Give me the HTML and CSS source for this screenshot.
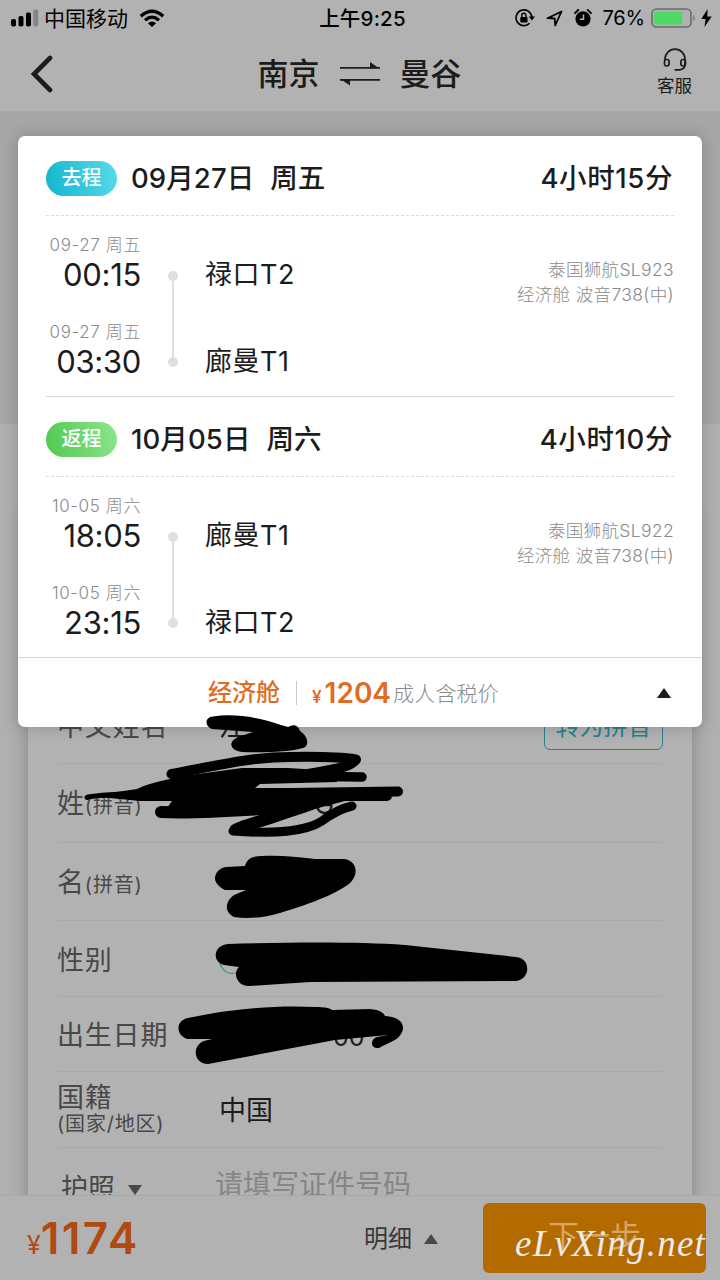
FILE: index.html
```html
<!DOCTYPE html>
<html lang="zh-CN">
<head>
  <meta charset="UTF-8" />
  <meta name="viewport" content="width=device-width, initial-scale=1.0"/>
  <title>南京 - 曼谷</title>
  <link rel="stylesheet" href="styles.css">
</head>
<body>
  <div class="page">
    <header class="topo">
      <div class="status">
        <div class="status-left">
          <svg width="29" height="18" viewBox="0 0 29 18">
            <rect x="0" y="10" width="5" height="7.500" rx="1.800"/>
            <rect x="7.500" y="7" width="5" height="10.500" rx="1.800"/>
            <rect x="15" y="3.500" width="5" height="14" rx="1.800"/>
            <rect x="22.300" y="0.500" width="5" height="17" rx="1.800" fill="#858585"/>
          </svg>
          <span class="carrier">中国移动</span>
          <svg class="wifi" width="26" height="19" viewBox="0 0 26 19">
            <path d="M1.800 7.200Q13 -2.800 24.200 7.200" fill="none" stroke="#000" stroke-width="3.400"/>
            <path d="M6 11.200Q13 5.200 20 11.200" fill="none" stroke="#000" stroke-width="3.200"/>
            <path d="M8.900 14.200Q13 10.600 17.100 14.200L13 18Z"/>
          </svg>
        </div>
        <div class="status-time">上午9:25</div>
        <div class="status-right">
          <svg width="20" height="18" viewBox="0 0 20 18">
            <path d="M14.600 14.300A7.900 7.900 0 1 1 16.800 8" fill="none" stroke="#000" stroke-width="1.600"/>
            <path d="M13.800 7.500H20L16.900 11.500Z"/>
            <rect x="5.300" y="8" width="7.200" height="5.600" rx=".8"/>
            <path d="M6.800 8.500V6.400a2.100 2.100 0 0 1 4.200 0V8.500" fill="none" stroke="#000" stroke-width="1.400"/>
          </svg>
          <svg class="loc" width="17" height="17" viewBox="0 0 17 17">
            <path d="M1.500 8.200L15.500 1.500L9.200 15.500L8.700 8.500Z" fill="none" stroke="#000" stroke-width="1.800" stroke-linejoin="round"/>
          </svg>
          <svg class="alarm" width="18" height="18" viewBox="0 0 18 18">
            <circle cx="9" cy="9.800" r="7.600"/>
            <path d="M1 4.200L4.200 1M17 4.200L13.800 1" stroke="#000" stroke-width="1.900" stroke-linecap="round"/>
            <path d="M9.500 5.500V10.300H5.800" fill="none" stroke="#b2b2b2" stroke-width="1.500"/>
          </svg>
          <span class="pct">76%</span>
          <svg width="46" height="20" viewBox="0 0 46 20">
            <rect x="1" y="1" width="39" height="18" rx="4.500" fill="none" stroke="#6c6c6c" stroke-width="1.600"/>
            <rect x="3.200" y="3.400" width="28" height="13.200" rx="1.500" fill="#4cd964"/>
            <path d="M42.300 6.500Q45 10 42.300 13.500Z" fill="#6c6c6c"/>
          </svg>
          <svg class="bolt" width="11" height="18" viewBox="0 0 11 18">
            <path d="M6.600 0L0.300 10H4.600L3.400 18L10.700 7.400H6.300Z"/>
          </svg>
        </div>
      </div>
      <div class="nav">
        <svg class="back" width="24" height="38" viewBox="0 0 24 38">
          <path d="M21 3L5 19L21 35" fill="none" stroke="#1c1c1c" stroke-width="4.600" stroke-linecap="round"/>
        </svg>
        <div class="route">
          <span>南京</span>
          <svg width="40" height="26" viewBox="0 0 40 26">
            <path d="M0 6.800H40M0 18.800H40" stroke="#1c1c1c" stroke-width="1.800"/>
            <path d="M30 1L39 7.200H30ZM1 18.500H10V24.500Z" fill="#1c1c1c"/>
          </svg>
          <span>曼谷</span>
        </div>
        <div class="service">
          <svg width="24" height="24" viewBox="0 0 24 24" fill="none" stroke="#1c1c1c" stroke-width="1.700">
            <path d="M2 12V11.500a10 10.300 0 0 1 20 0V16q0 5.500-5.500 5.800H11.500"/>
            <rect x="1.500" y="11.500" width="4.600" height="6.500" rx="2.200"/>
            <rect x="17.900" y="11.500" width="4.600" height="6.500" rx="2.200"/>
          </svg>
          <span>客服</span>
        </div>
      </div>
    </header>

    <main class="content">
      <form class="passenger">
        <div class="row row-name"><label>中文姓名</label><span class="value">汪</span><span class="pinyin-btn">转为拼音</span></div>
        <div class="row row-tall"><label>姓<small>(拼音)</small></label><span class="value value-g">G</span></div>
        <div class="row"><label>名<small>(拼音)</small></label></div>
        <div class="row row-sex"><label>性别</label><span class="radio"></span></div>
        <div class="row row-birth"><label>出生日期</label><span class="value value-day">00</span></div>
        <div class="row row-nation"><label>国籍<small>(国家/地区)</small></label><span class="value">中国</span></div>
        <div class="row row-doc"><label>护照 <i class="down"></i></label><span class="hint">请填写证件号码</span></div>
      </form>
    </main>

    <footer class="bar">
      <div class="total"><small>¥</small>1174</div>
      <div class="detail">明细 <i class="up"></i></div>
      <div class="next">下一步</div>
    </footer>

    <section class="modal">
      <div class="leg">
        <div class="leg-head">
          <span class="tag tag-go">去程</span>
          <span class="day">09月27日</span><span class="week">周五</span>
          <span class="duration">4小时15分</span>
        </div>
        <div class="leg-body">
          <div class="times">
            <div class="date">09-27 周五</div><div class="time">00:15</div>
            <div class="date">09-27 周五</div><div class="time">03:30</div>
          </div>
          <div class="track"><i></i><b></b><i></i></div>
          <div class="stations"><span>禄口T2</span><span>廊曼T1</span></div>
          <div class="plane">泰国狮航SL923<br>经济舱 波音738(中)</div>
        </div>
      </div>
      <div class="leg leg-back">
        <div class="leg-head">
          <span class="tag tag-back">返程</span>
          <span class="day">10月05日</span><span class="week">周六</span>
          <span class="duration">4小时10分</span>
        </div>
        <div class="leg-body">
          <div class="times">
            <div class="date">10-05 周六</div><div class="time">18:05</div>
            <div class="date">10-05 周六</div><div class="time">23:15</div>
          </div>
          <div class="track"><i></i><b></b><i></i></div>
          <div class="stations"><span>廊曼T1</span><span>禄口T2</span></div>
          <div class="plane">泰国狮航SL922<br>经济舱 波音738(中)</div>
        </div>
      </div>
      <div class="fare">
        <span class="cabin">经济舱</span>
        <span class="price"><small>¥</small>1204</span>
        <span class="tax">成人含税价</span>
        <i class="up up-black"></i>
      </div>
    </section>

    <!-- marker strokes over the private data -->
    <svg class="marker" width="720" height="400" viewBox="0 700 720 400">
      <path d="M213 716.500C235 713 262 718 281 725L288 727Q297 722 300 731C308 736 310 746 303 748C290 752 262 753 242 752C229 751 227 740 241 736L253 732L212 729C204 726 205 717 213 716.500Z"/>
      <g fill="none" stroke="#000" stroke-linecap="round" stroke-linejoin="round">
        <path d="M171.500 774C215 766 250 757 290 757C320 756.500 340 757 356 759.500C350 768 330 770 308 774" stroke-width="10"/>
        <path d="M290 776L362 777" stroke-width="9.500"/>
        <path d="M87 797.500Q92 795 140 793.500" stroke-width="5"/>
        <path d="M145 795L398 791.500M180 796L387 796" stroke-width="10"/>
        <path d="M161 812C200 814 240 810 275 808" stroke-width="12"/>
        <path d="M233 831C275 834 305 832 322 821Q338 809 352 806" stroke-width="9"/>
      </g>
      <path d="M90 796L137 789C147 784 160 781 183 776L242 768H288L337 771V782L260 784L255 788H390V799L345 801L318 808L262 815L160 818L172 801H140Z"/>
      <path d="M230 827C232 823 245 820 262 814L345 799L318 808C290 818 265 826 246 832Z"/>
      <path d="M245 866C247 858 253 856 262 856C280 855 297 857 315 859L345 859C359 862 359 878 346 886C330 897 300 907 280 913C263 918 247 919 234 917C223 911 226 901 234 895L246 890L226 890C222 890 215 883 215 879C215 873 219 868 226 867Z"/>
      <path d="M228 944C300 942 360 942 405 945L516 957C531 958 531 979 516 981L310 982L250 986C238 987 232 974 239 967L224 965C211 961 214 945 228 944Z"/>
      <path d="M188 1018C230 1009 275 1005 315 1007C325 1007 330 1008 332 1010L370 1009C380 1010 384 1013 385 1016C402 1017 406 1026 401 1034C397 1041 387 1043 379 1048C370 1049 370 1039 377 1037L388 1035L335 1040L208 1064C193 1064 192 1045 204 1041L212 1039L187 1039C175 1035 176 1020 188 1018Z"/>
    </svg>

    <div class="watermark">eLvXing.net</div>
  </div>
</body>
</html>
```
FILE: styles.css
```css
body {
  margin: 0;
  font-family: Inter, "Noto Sans CJK SC", sans-serif;
  color: #1c1c1c;
}
i {
  font-style: normal;
}
svg {
  flex: none;
}
.page {
  position: relative;
  width: 720px;
  height: 1280px;
  overflow: hidden;
  background: #b0b0b0;
  display: flex;
  flex-direction: column;
}

/* status bar + title */
.topo {
  height: 111px;
  background: #b2b2b2;
  flex: none;
}
.status {
  display: grid;
  grid-template-columns: 1fr auto 1fr;
  align-items: center;
  height: 36px;
  padding: 0 8px 0 11px;
  color: #000;
}
.status-left, .status-right {
  display: flex;
  align-items: center;
}
.status-right {
  justify-content: flex-end;
}
.carrier {
  margin-left: 4px;
  font-size: 21px;
  line-height: 30px;
  padding-top: 1px;
}
.wifi {
  margin-left: 11px;
}
.status-time {
  font-size: 20.5px;
  font-weight: 500;
  line-height: 30px;
  letter-spacing: 0.2px;
  padding: 2px 0 0 2px;
}
.loc {
  margin-left: 11px;
}
.alarm {
  margin-left: 11px;
}
.pct {
  margin: 0 6px 0 11px;
  font-size: 20px;
  letter-spacing: -0.2px;
}
.bolt {
  margin-left: 4px;
}
.nav {
  display: flex;
  justify-content: space-between;
  align-items: center;
  height: 75px;
  padding: 0 28px 0 29px;
}
.back {
  margin-right: 11px;
}
.route {
  display: flex;
  align-items: center;
  gap: 20px;
  font-size: 31px;
  font-weight: 500;
  line-height: 40px;
  padding-right: 2px;
}
.service {
  display: flex;
  flex-direction: column;
  align-items: center;
  font-size: 17.5px;
  line-height: 28px;
  padding-top: 1px;
}

/* passenger form behind the card */
.content {
  flex: 1;
  overflow: hidden;
  padding: 0 28px;
  background: linear-gradient(#a6a6a6 313px, #b0b0b0 313px);
}
.passenger {
  padding: 0 29px;
  margin-top: 400px;
  padding-top: 175px;
  background: #b2b2b2;
  box-shadow: 0 0 18px rgba(0, 0, 0, 0.25);
}
.row {
  display: flex;
  align-items: center;
  box-sizing: border-box;
  height: 78px;
  padding-top: 4px;
  border-bottom: 1px solid #a9a9a9;
  font-size: 27px;
  line-height: 32px;
  color: #484848;
}
.row label {
  width: 162px;
  white-space: nowrap;
  letter-spacing: 0.8px;
}
.row small {
  font-size: 20px;
}
.row-tall {
  height: 79px;
}
.row-sex {
  height: 76px;
}
.row-birth {
  height: 75px;
}
.row-nation {
  height: 76px;
  padding-top: 2px;
}
.row-nation label {
  line-height: 27px;
}
.row-nation small {
  display: block;
}
.row-doc label {
  padding-left: 4px;
  width: 154px;
  letter-spacing: 0;
}
.value {
  color: #1c1c1c;
}
.value-g {
  margin-left: 95px;
}
.value-day {
  margin-left: 114px;
  margin-top: 2px;
  font-size: 25px;
}
.pinyin-btn {
  box-sizing: border-box;
  width: 119px;
  height: 50px;
  margin-left: auto;
  margin-bottom: 4px;
  border: 1px solid #238390;
  border-radius: 6px;
  font-size: 24px;
  line-height: 51px;
  text-align: center;
  color: #238390;
}
.radio {
  width: 24px;
  height: 28px;
  margin-bottom: 3px;
  border: 1px solid #238390;
  border-radius: 50%;
}
.hint {
  font-size: 28px;
  color: #858585;
  padding-bottom: 7px;
}
.up, .down {
  display: inline-block;
  border: 7px solid transparent;
  border-top: 0;
  border-bottom: 10px solid #484848;
  margin-left: 5px;
  vertical-align: 3px;
}
.down {
  border-bottom: 0;
  border-top: 10px solid #484848;
}

/* bottom bar */
.bar {
  display: flex;
  align-items: center;
  height: 85px;
  flex: none;
  background: #b2b2b2;
  border-top: 1px solid #a9a9a9;
  box-sizing: border-box;
  padding: 0 14px 0 27px;
}
.total {
  width: 337px;
  font-size: 44px;
  font-weight: 600;
  letter-spacing: 2.4px;
  color: #b04a10;
}
.total small {
  font-size: 25px;
  font-weight: 400;
  letter-spacing: 0;
}
.detail {
  width: 119px;
  padding-bottom: 3px;
  font-size: 24px;
  color: #383838;
}
.next {
  width: 223px;
  height: 70px;
  border-radius: 6px;
  background: #b36b00;
  font-size: 31px;
  line-height: 66px;
  text-align: center;
  color: #d9a561;
}

/* itinerary card */
.modal {
  position: absolute;
  left: 18px;
  top: 136px;
  width: 684px;
  height: 591px;
  border-radius: 7px;
  background: #fff;
  box-shadow: 0 0 16px rgba(0, 0, 0, 0.2);
}
.leg {
  box-sizing: border-box;
  height: 261px;
  margin: 0 28px;
  border-bottom: 1px solid #d5d5d5;
}
.leg-back {
  margin: 0;
  padding: 0 28px;
}
.leg-head {
  box-sizing: border-box;
  display: flex;
  align-items: center;
  height: 80px;
  padding-top: 5px;
  border-bottom: 1px dashed #dcdcdc;
  font-size: 27.5px;
  line-height: 37px;
  font-weight: 500;
}
.day {
  letter-spacing: 0.1px;
}
.tag {
  width: 71px;
  height: 35px;
  margin-right: 14px;
  border-radius: 18px;
  font-size: 20px;
  line-height: 35px;
  text-align: center;
  color: #fff;
}
.tag-go {
  background: linear-gradient(75deg, #12b5ce, #58dcea);
}
.tag-back {
  background: linear-gradient(75deg, #50c850, #8ee58e);
}
.week {
  margin-left: 16px;
}
.duration {
  margin-left: auto;
  margin-right: 1px;
  letter-spacing: 0.6px;
}
.leg-body {
  display: flex;
  padding-top: 18px;
}
.times {
  width: 95px;
  text-align: right;
}
.date {
  font-size: 17px;
  font-weight: 300;
  line-height: 22px;
  letter-spacing: 0.6px;
  color: #8a8a8a;
  white-space: nowrap;
}
.time {
  font-size: 31px;
  line-height: 38px;
  letter-spacing: -0.3px;
  margin-bottom: 27px;
}
.track {
  display: flex;
  flex-direction: column;
  align-items: center;
  width: 10px;
  height: 96px;
  margin: 37px 27px 0 27px;
}
.track i {
  width: 10px;
  height: 10px;
  border-radius: 50%;
  background: #dcdfe3;
}
.track b {
  flex: 1;
  width: 2px;
  background: #dcdfe3;
}
.stations {
  display: flex;
  flex-direction: column;
  gap: 49px;
  padding-top: 22px;
  font-size: 27px;
  line-height: 38px;
  letter-spacing: 0.5px;
}
.plane {
  margin-left: auto;
  padding-top: 23px;
  font-size: 17.5px;
  font-weight: 300;
  line-height: 25px;
  letter-spacing: 0.35px;
  text-align: right;
  color: #8a8a8a;
}
.fare {
  display: flex;
  align-items: center;
  height: 69px;
  padding: 0 31px 0 190px;
}
.cabin {
  padding-right: 16px;
  border-right: 1px solid #c8c8c8;
  font-size: 24px;
  line-height: 24px;
  font-weight: 500;
  color: #e06c1f;
}
.price {
  margin-left: 15px;
  font-size: 28px;
  font-weight: 600;
  color: #e06c1f;
}
.price small {
  font-size: 17px;
  margin-right: 3px;
}
.tax {
  margin-left: 2px;
  margin-bottom: 2px;
  font-size: 21px;
  font-weight: 300;
  letter-spacing: 0.2px;
  color: #8a8a8a;
}
.up-black {
  margin-left: auto;
  border-bottom-color: #1c1c1c;
}

.marker {
  position: absolute;
  left: 0;
  top: 700px;
}
.watermark {
  position: absolute;
  right: 14px;
  top: 1222px;
  font-family: "Liberation Serif", cursive;
  font-style: italic;
  font-size: 37px;
  line-height: 44px;
  letter-spacing: 1.2px;
  color: #ececec;
}
```
